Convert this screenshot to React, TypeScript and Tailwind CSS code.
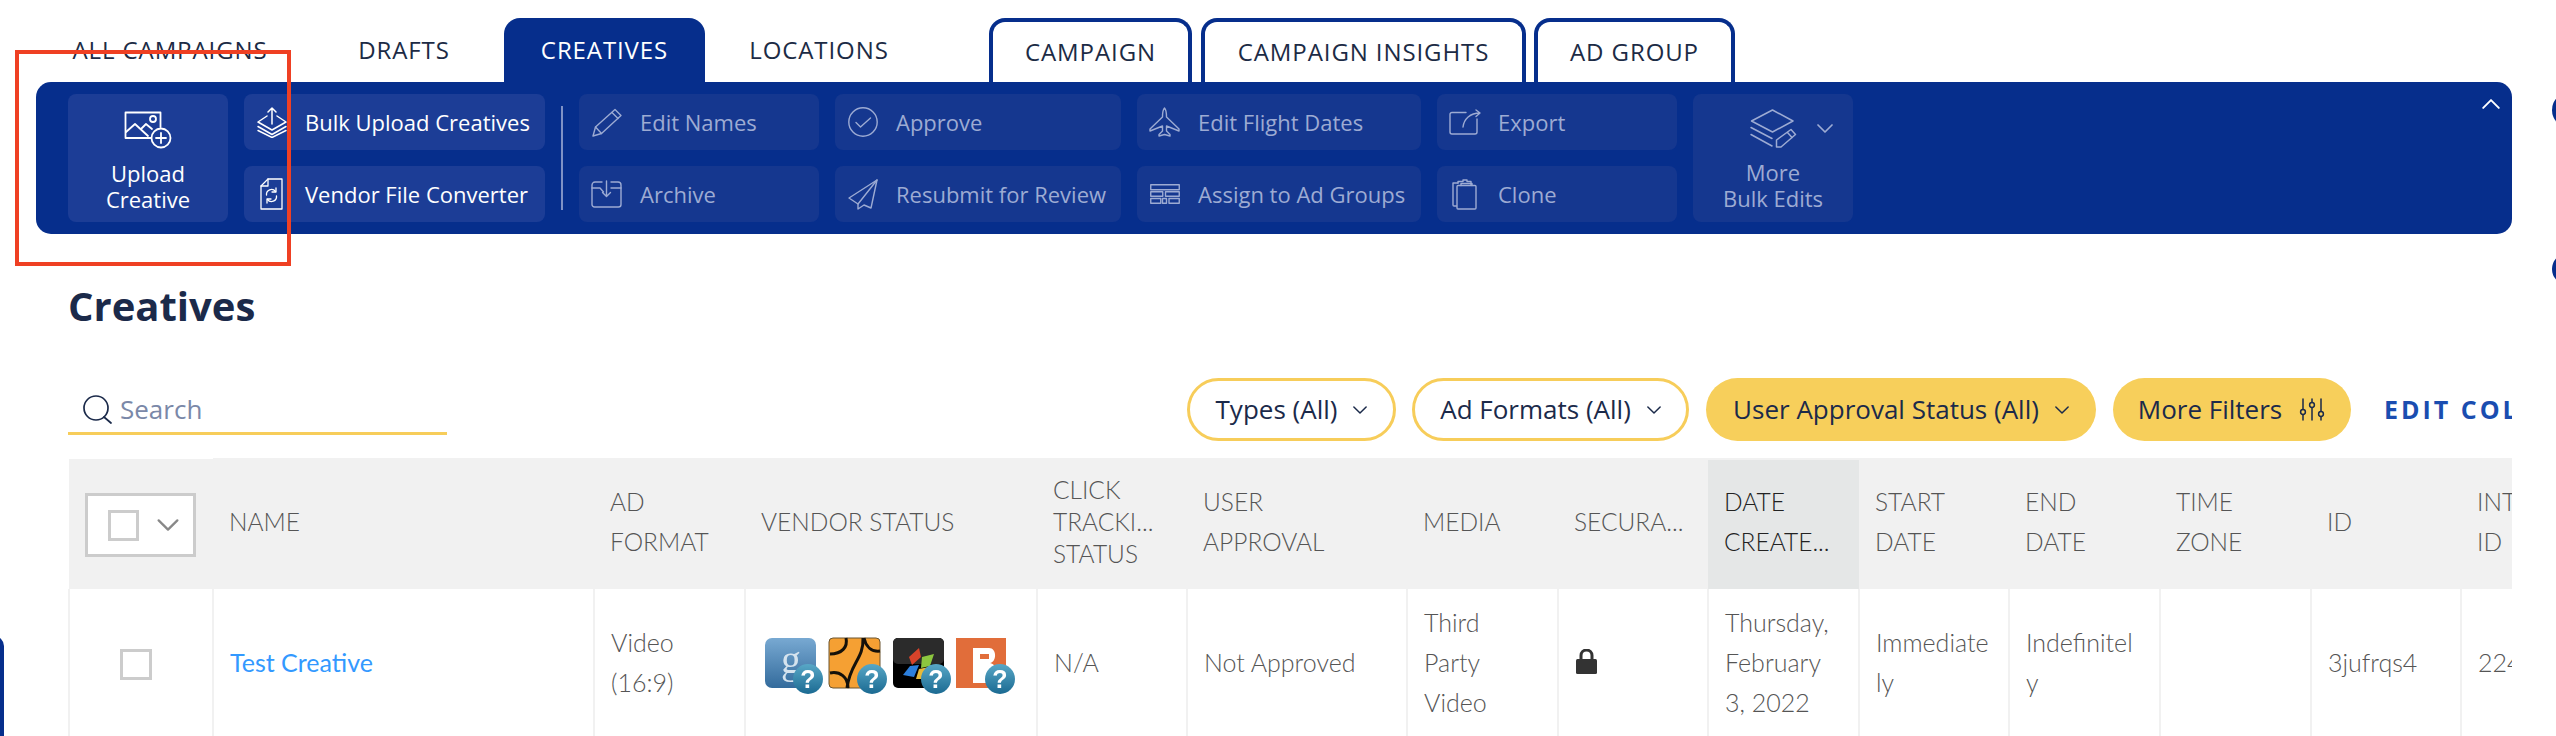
import type { ReactNode } from "react"

const iconProps = {
  fill: "none",
  stroke: "currentColor",
  strokeWidth: 1.4,
  strokeLinecap: "round" as const,
  strokeLinejoin: "round" as const,
}

function UploadIcon() {
  return (
    <svg width="48" height="38" viewBox="0 0 48 38" {...iconProps} strokeWidth={1.8}>
      <path d="M27 27H1.5V1.5H36.5V16" />
      <path d="M2 21L11 13L24 25" />
      <path d="M17 18L22 13L28 18" />
      <circle cx="29" cy="8" r="3" />
      <circle cx="37" cy="27" r="9.5" />
      <path d="M37 22V32M32 27H42" />
    </svg>
  )
}

function BulkIcon() {
  return (
    <svg width="30" height="31" viewBox="0 0 30 31" {...iconProps} strokeWidth={1.5}>
      <path d="M10 9L1 15L15 23L29 15L20 9" />
      <path d="M1 19.5L15 27.5L29 19.5" />
      <path d="M1 23.5L15 30.5L29 23.5" />
      <path d="M15 17V1M11 5L15 1L19 5" />
    </svg>
  )
}

function FileIcon() {
  return (
    <svg width="23" height="32" viewBox="0 0 23 32" {...iconProps} strokeWidth={1.3}>
      <path d="M8 1H22V31H1V8Z" />
      <path d="M8 1V8H1" />
      <path d="M6.5 17A5 5 0 0 1 15.5 13.5M16.5 18A5 5 0 0 1 7.5 21.5" />
      <path d="M16 10V14H12M7 25V21H11" />
    </svg>
  )
}

function PencilIcon() {
  return (
    <svg width="30" height="29" viewBox="0 0 30 29" {...iconProps}>
      <path d="M1 28L3.5 19L23 1.5L29 7.5L9.5 25.5Z" />
      <path d="M20 4.5L26 10.5M3.5 19L9.5 25.5" />
    </svg>
  )
}

function CheckCircleIcon() {
  return (
    <svg width="30" height="30" viewBox="0 0 30 30" {...iconProps}>
      <circle cx="15" cy="15" r="14.2" />
      <path d="M8 15.5L12.5 20L22.5 11" />
    </svg>
  )
}

function ArchiveIcon() {
  return (
    <svg width="31" height="28" viewBox="0 0 31 28" {...iconProps}>
      <path d="M11 2H4A3 3 0 0 0 1 5V24.5A2.5 2.5 0 0 0 3.5 27H27.5A2.5 2.5 0 0 0 30 24.5V5A3 3 0 0 0 27 2H20" />
      <path d="M1 8H9L12.5 12M30 8H20" />
      <path d="M15.5 1V16M11.5 12.5L15.5 16.5L19.5 12.5" />
    </svg>
  )
}

function PlaneSendIcon() {
  return (
    <svg width="30" height="31" viewBox="0 0 30 31" {...iconProps}>
      <path d="M29 1L1 19L10 25V30L16 26L23 29Z" />
      <path d="M29 1L10 25" />
    </svg>
  )
}

function FlightIcon() {
  return (
    <svg width="31" height="30" viewBox="0 0 31 30" {...iconProps}>
      <path d="M15.5 1C13.5 3 13.5 6 13.5 10L1 22V24L13.5 19V24L10 27.5V29L15.5 27.5L21 29V27.5L17.5 24V19L30 24V22L17.5 10C17.5 6 17.5 3 15.5 1Z" />
    </svg>
  )
}

function AssignIcon() {
  return (
    <svg width="30" height="20" viewBox="0 0 30 20" {...iconProps}>
      <rect x="0.75" y="0.75" width="28.5" height="5" />
      <rect x="0.75" y="7.75" width="12" height="4.5" />
      <rect x="15.5" y="7.75" width="13.75" height="4.5" />
      <rect x="0.75" y="14.5" width="10" height="4.75" />
      <rect x="12.5" y="14.5" width="4" height="4.75" />
      <rect x="19" y="14.5" width="10.25" height="4.75" />
    </svg>
  )
}

function ExportIcon() {
  return (
    <svg width="32" height="26" viewBox="0 0 32 26" {...iconProps}>
      <path d="M17 3.5H3A2 2 0 0 0 1 5.5V23A2 2 0 0 0 3 25H26A2 2 0 0 0 28 23V10" />
      <path d="M14 18C15 10 21 4 31 4M27 1L31 4L27 7.5" />
    </svg>
  )
}

function CloneIcon() {
  return (
    <svg width="25" height="31" viewBox="0 0 25 31" {...iconProps}>
      <path d="M4.5 27H2A1 1 0 0 1 1 26V4H6" />
      <path d="M6 4V2.5H11V1H15V2.5H19V6" />
      <rect x="5" y="6.5" width="19" height="23.5" rx="1" />
      <path d="M9 6.5V4.5H20V6.5" />
    </svg>
  )
}

function MoreIcon() {
  return (
    <svg width="47" height="39" viewBox="0 0 47 39" {...iconProps} strokeWidth={1.5}>
      <path d="M22.5 1L43 12L22.5 23L1.5 12Z" />
      <path d="M1 18.5L22 29.5" />
      <path d="M1 25.5L22 37" />
      <path d="M26.5 38V31L41 20.5L45.5 25.5L31 38Z" />
      <path d="M37.5 23.5L42 28.5" />
    </svg>
  )
}

function Chevron({ className }: { className: string }) {
  return (
    <svg className={className} viewBox="0 0 16 9" fill="none" stroke="currentColor" strokeWidth={1.7} strokeLinecap="round" strokeLinejoin="round">
      <path d="M1 1L8 8L15 1" />
    </svg>
  )
}

function SlidersIcon() {
  return (
    <svg width="28" height="23" viewBox="0 0 28 23" {...iconProps} strokeWidth={1.5}>
      <path d="M5 1V11M5 17V22M14 1V4M14 10V22M23 1V13M23 19V22" />
      <circle cx="5" cy="14" r="2.4" />
      <circle cx="14" cy="7" r="2.4" />
      <circle cx="23" cy="16" r="2.4" />
    </svg>
  )
}

function SearchIcon() {
  return (
    <svg width="30" height="29" viewBox="0 0 30 29" fill="none" stroke="#1b2a4a" strokeWidth={1.7} strokeLinecap="round">
      <circle cx="13" cy="13" r="12" />
      <path d="M21 22L28 28" />
    </svg>
  )
}

function LockIcon() {
  return (
    <svg width="23" height="25" viewBox="0 0 23 25">
      <path d="M6 11V6.5A5.5 5.5 0 0 1 17 6.5V11" fill="none" stroke="#333" strokeWidth={3} />
      <rect x="1" y="10" width="21" height="15" rx="1.5" fill="#333" />
    </svg>
  )
}

function HelpBadge({ id }: { id: string }) {
  return (
    <g>
      <defs>
        <linearGradient id={id} x1="0" y1="0" x2="0" y2="1">
          <stop offset="0" stopColor="#58a7c6" />
          <stop offset="1" stopColor="#1b6a92" />
        </linearGradient>
      </defs>
      <circle cx="44" cy="42" r="15" fill={`url(#${id})`} />
      <text x="44" y="51" textAnchor="middle" fontSize="25" fontWeight="700" fontFamily="'Liberation Sans', sans-serif" fill="#fff">?</text>
    </g>
  )
}

function VendorLogos() {
  return (
    <div className="flex gap-[4px] pt-[11px] pl-[2px] blur-[0.6px]">
      <svg width="60" height="60" viewBox="0 0 60 60">
        <defs>
          <linearGradient id="gBlue" x1="0" y1="0" x2="0" y2="1">
            <stop offset="0" stopColor="#78a9d2" />
            <stop offset="1" stopColor="#336b9c" />
          </linearGradient>
        </defs>
        <rect x="1" y="1" width="51" height="50" rx="7" fill="url(#gBlue)" />
        <text x="27" y="36" textAnchor="middle" fontSize="40" fontFamily="'Liberation Serif', serif" fill="#d5e3ee">g</text>
        <HelpBadge id="badgeA" />
      </svg>
      <svg width="60" height="60" viewBox="0 0 60 60">
        <rect x="1" y="1" width="51" height="50" rx="4" fill="#f5a033" stroke="#6b5530" strokeWidth={1} />
        <path d="M18 1C20 10 14 17 2 17M35 1C36 22 22 26 19 51M36 1C38 10 44 15 52 14M2 36C12 34 20 40 20 51" fill="none" stroke="#15110a" strokeWidth={3} />
        <HelpBadge id="badgeB" />
      </svg>
      <svg width="60" height="60" viewBox="0 0 60 60">
        <rect x="1" y="1" width="51" height="50" rx="5" fill="#000" />
        <rect x="1" y="1" width="51" height="26" rx="5" fill="#2b2b2b" />
        <path d="M17 20L27 11L29 20L20 28Z" fill="#d8432a" />
        <path d="M30 20L42 17L38 29L29 31Z" fill="#8cc63f" />
        <path d="M11 38L18 29L27 28L22 40Z" fill="#2c7fdc" />
        <path d="M27 32L37 30L33 42L24 42Z" fill="#e6b93a" />
        <HelpBadge id="badgeC" />
      </svg>
      <svg width="60" height="60" viewBox="0 0 60 60">
        <rect x="0" y="1" width="50" height="50" fill="#e16d3a" />
        <path d="M17 11H33C41 11 41 25 34 26C43 27 43 46 31 46H17Z" fill="#fff" />
        <rect x="24" y="17" width="9" height="5" fill="#e16d3a" />
        <HelpBadge id="badgeD" />
      </svg>
    </div>
  )
}

function ActionButton({ icon, label, active }: { icon: ReactNode; label: string; active?: boolean }) {
  return (
    <div
      className={
        active
          ? "flex h-[56px] items-center rounded-[8px] bg-[#1c3d96] text-white"
          : "flex h-[56px] items-center rounded-[8px] bg-[#15378f] text-[#9dabd3]"
      }
    >
      <div className="flex w-[55px] shrink-0 justify-center">{icon}</div>
      <span className="ml-[6px] whitespace-nowrap text-[22px]">{label}</span>
    </div>
  )
}

function TabLink({ label, className }: { label: string; className: string }) {
  return (
    <div className={`flex h-[64px] items-center justify-center text-[24px] tracking-[0.9px] whitespace-nowrap text-[#1c2b45] ${className}`}>
      {label}
    </div>
  )
}

function HeaderCell({ lines, tight, active }: { lines: string[]; tight?: boolean; active?: boolean }) {
  return (
    <th
      className={
        active
          ? "border-t-2 border-[#f1f1f1] bg-[#e5e7e7] px-[16px] pb-[5px] text-left align-middle text-[24.5px] leading-[40px] font-light text-[#222]"
          : tight
            ? "border-t-2 border-[#f1f1f1] px-[16px] pb-[5px] text-left align-middle text-[24.5px] leading-[32px] font-light text-[#555]"
            : "border-t-2 border-[#f1f1f1] px-[16px] pb-[5px] text-left align-middle text-[24.5px] leading-[40px] font-light text-[#555]"
      }
    >
      {lines.map((line) => (
        <div key={line} className="whitespace-nowrap">
          {line}
        </div>
      ))}
    </th>
  )
}

function BodyCell({ children }: { children?: ReactNode }) {
  return <td className="border-l-2 border-[#f1f1f1] px-[16px] pb-[3px] align-middle text-[25px] leading-[40px] font-light text-[#555]">{children}</td>
}

export default function App() {
  return (
    <div className="relative h-[736px] w-[2556px] overflow-hidden bg-white font-['Open_Sans',sans-serif]">
      {/* tabs */}
      <div className="ml-[36px] flex pt-[18px]">
        <TabLink label="ALL CAMPAIGNS" className="w-[268px]" />
        <TabLink label="DRAFTS" className="ml-[18px] w-[164px]" />
        <div className="ml-[18px] flex h-[64px] w-[201px] items-center justify-center rounded-t-[16px] bg-[#062e8c] text-[24px] tracking-[0.9px] text-white">
          CREATIVES
        </div>
        <TabLink label="LOCATIONS" className="ml-[8px] w-[212px]" />
        <TabLink label="CAMPAIGN" className="ml-[64px] w-[203px] rounded-t-[16px] border-x-[4px] border-t-[4px] border-[#062e8c]" />
        <TabLink label="CAMPAIGN INSIGHTS" className="ml-[9px] w-[325px] rounded-t-[16px] border-x-[4px] border-t-[4px] border-[#062e8c]" />
        <TabLink label="AD GROUP" className="ml-[8px] w-[201px] rounded-t-[16px] border-x-[4px] border-t-[4px] border-[#062e8c]" />
      </div>

      {/* bulk actions */}
      <div className="relative ml-[36px] flex h-[152px] w-[2476px] rounded-[15px] bg-[#062e8c] py-[12px] pl-[32px]">
        <div className="flex h-[128px] w-[160px] flex-col items-center rounded-[8px] bg-[#1c3d96] pt-[17px] text-white">
          <UploadIcon />
          <div className="mt-[11px] text-center text-[22px] leading-[26px]">
            Upload
            <br />
            Creative
          </div>
        </div>
        <div className="ml-[16px] grid w-[301px] grid-rows-2 gap-[16px]">
          <ActionButton active icon={<BulkIcon />} label="Bulk Upload Creatives" />
          <ActionButton active icon={<FileIcon />} label="Vendor File Converter" />
        </div>
        <div className="mx-[16px] my-[12px] w-[2px] bg-[#7f92c6]" />
        <div className="grid w-[240px] grid-rows-2 gap-[16px]">
          <ActionButton icon={<PencilIcon />} label="Edit Names" />
          <ActionButton icon={<ArchiveIcon />} label="Archive" />
        </div>
        <div className="ml-[16px] grid w-[286px] grid-rows-2 gap-[16px]">
          <ActionButton icon={<CheckCircleIcon />} label="Approve" />
          <ActionButton icon={<PlaneSendIcon />} label="Resubmit for Review" />
        </div>
        <div className="ml-[16px] grid w-[284px] grid-rows-2 gap-[16px]">
          <ActionButton icon={<FlightIcon />} label="Edit Flight Dates" />
          <ActionButton icon={<AssignIcon />} label="Assign to Ad Groups" />
        </div>
        <div className="ml-[16px] grid w-[240px] grid-rows-2 gap-[16px]">
          <ActionButton icon={<ExportIcon />} label="Export" />
          <ActionButton icon={<CloneIcon />} label="Clone" />
        </div>
        <div className="ml-[16px] flex h-[128px] w-[160px] flex-col items-center rounded-[8px] bg-[#15378f] pt-[15px] text-[#9dabd3]">
          <div className="flex w-full items-center pl-[57px]">
            <MoreIcon />
            <Chevron className="ml-[20px] h-[9px] w-[16px]" />
          </div>
          <div className="mt-[11px] text-center text-[22px] leading-[26px]">
            More
            <br />
            Bulk Edits
          </div>
        </div>
        <Chevron className="absolute top-[17px] right-[12px] h-[10px] w-[18px] rotate-180 text-white" />
      </div>

      {/* heading */}
      <h1 className="mt-[46px] ml-[68px] text-[40px] leading-[52px] font-bold text-[#1b2a4a]">Creatives</h1>

      {/* filters */}
      <div className="mt-[46px] ml-[68px] flex h-[63px] w-[2444px] items-center overflow-hidden">
        <div className="flex h-[57px] w-[379px] shrink-0 items-end self-start border-b-[3px] border-[#f7cd5a] pb-[8px] pl-[15px]">
          <SearchIcon />
          <span className="ml-[7px] text-[26px] leading-[30px] text-[#7a88a8]">Search</span>
        </div>
        <div className="ml-[740px] flex h-[63px] w-[209px] shrink-0 items-center justify-center rounded-full border-[3px] border-[#f7cd5a] text-[26px] text-[#1b2a4a]">
          Types (All)
          <Chevron className="ml-[16px] h-[8px] w-[14px]" />
        </div>
        <div className="ml-[16px] flex h-[63px] w-[277px] shrink-0 items-center justify-center rounded-full border-[3px] border-[#f7cd5a] text-[26px] text-[#1b2a4a]">
          Ad Formats (All)
          <Chevron className="ml-[16px] h-[8px] w-[14px]" />
        </div>
        <div className="ml-[17px] flex h-[63px] w-[390px] shrink-0 items-center justify-center rounded-full bg-[#f7cf5b] text-[26px] whitespace-nowrap text-[#1b2a4a]">
          User Approval Status (All)
          <Chevron className="ml-[16px] h-[8px] w-[14px]" />
        </div>
        <div className="ml-[17px] flex h-[63px] w-[238px] shrink-0 items-center justify-center rounded-full bg-[#f7cf5b] text-[26px] text-[#1b2a4a]">
          More Filters
          <span className="ml-[16px] flex">
            <SlidersIcon />
          </span>
        </div>
        <span className="ml-[33px] shrink-0 text-[25px] font-bold tracking-[3px] whitespace-nowrap text-[#1a4db0]">
          EDIT COLUMNS
        </span>
      </div>

      {/* table */}
      <div className="mt-[17px] ml-[68px] w-[2444px] overflow-hidden font-['Lato',sans-serif]">
        <table className="w-[2543px] table-fixed border-collapse">
          <colgroup>
            <col className="w-[144px]" />
            <col className="w-[381px]" />
            <col className="w-[151px]" />
            <col className="w-[292px]" />
            <col className="w-[150px]" />
            <col className="w-[220px]" />
            <col className="w-[151px]" />
            <col className="w-[150px]" />
            <col className="w-[151px]" />
            <col className="w-[150px]" />
            <col className="w-[151px]" />
            <col className="w-[151px]" />
            <col className="w-[150px]" />
            <col className="w-[151px]" />
          </colgroup>
          <thead>
            <tr className="h-[130px] bg-[#f1f1f1]">
              <th className="pl-[16px] align-middle">
                <div className="mt-[2px] flex h-[64px] w-[111px] items-center border-[3px] border-[#cccccc] bg-white pl-[20px]">
                  <div className="h-[31px] w-[31px] border-[3px] border-[#cccccc]" />
                  <Chevron className="ml-[18px] h-[12px] w-[22px] text-[#888]" />
                </div>
              </th>
              <HeaderCell lines={["NAME"]} />
              <HeaderCell lines={["AD", "FORMAT"]} />
              <HeaderCell lines={["VENDOR STATUS"]} />
              <HeaderCell tight lines={["CLICK", "TRACKI...", "STATUS"]} />
              <HeaderCell lines={["USER", "APPROVAL"]} />
              <HeaderCell lines={["MEDIA"]} />
              <HeaderCell lines={["SECURA..."]} />
              <HeaderCell active lines={["DATE", "CREATE..."]} />
              <HeaderCell lines={["START", "DATE"]} />
              <HeaderCell lines={["END", "DATE"]} />
              <HeaderCell lines={["TIME", "ZONE"]} />
              <HeaderCell lines={["ID"]} />
              <HeaderCell lines={["INT", "ID"]} />
            </tr>
          </thead>
          <tbody>
            <tr className="h-[148px]">
              <BodyCell>
                <div className="mt-[6px] ml-[34px] h-[31px] w-[32px] border-[3px] border-[#cccccc]" />
              </BodyCell>
              <BodyCell>
                <span className="font-normal text-[#3399ff]">Test Creative</span>
              </BodyCell>
              <BodyCell>
                Video
                <br />
                (16:9)
              </BodyCell>
              <BodyCell>
                <VendorLogos />
              </BodyCell>
              <BodyCell>N/A</BodyCell>
              <BodyCell>Not Approved</BodyCell>
              <BodyCell>
                Third
                <br />
                Party
                <br />
                Video
              </BodyCell>
              <BodyCell>
                <LockIcon />
              </BodyCell>
              <BodyCell>
                Thursday,
                <br />
                February
                <br />
                3, 2022
              </BodyCell>
              <BodyCell>
                Immediate
                <br />
                ly
              </BodyCell>
              <BodyCell>
                Indefinitel
                <br />y
              </BodyCell>
              <BodyCell />
              <BodyCell>3jufrqs4</BodyCell>
              <BodyCell>224</BodyCell>
            </tr>
          </tbody>
        </table>
      </div>

      {/* neighbouring widgets peeking in at the page edges */}
      <div className="absolute top-[92px] -right-[40px] h-[36px] w-[44px] rounded-full border-l-[4px] border-[#062e8c]" />
      <div className="absolute top-[253px] -right-[40px] h-[32px] w-[44px] rounded-full border-l-[4px] border-[#062e8c]" />
      <div className="absolute top-[636px] -left-[16px] h-[140px] w-[20px] rounded-[16px] bg-[#062e8c]" />

      {/* annotation */}
      <div className="absolute top-[50px] left-[15px] h-[216px] w-[276px] border-[4px] border-[#ef4023]" />
    </div>
  )
}
